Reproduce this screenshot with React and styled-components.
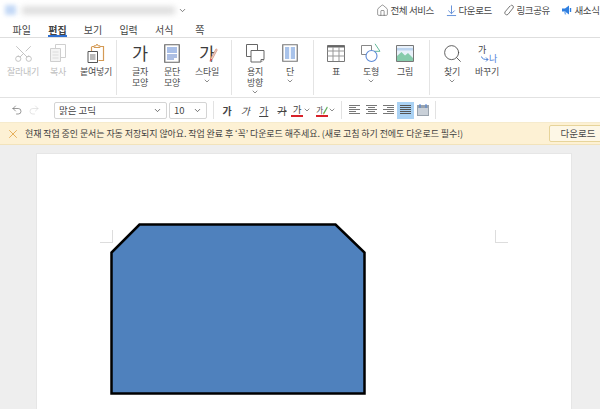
import React from 'react';
import styled, { createGlobalStyle } from 'styled-components';
import { House, Scissors, Search, Undo2, Redo2, X, ChevronDown } from 'lucide-react';

const GlobalStyle = createGlobalStyle`
    html, body {
        margin: 0;
        padding: 0;
        background: #fff;
    }
    * {
        box-sizing: border-box;
    }
`

const Screen = styled.div`
    width: 600px;
    height: 409px;
    overflow: hidden;
    display: flex;
    flex-direction: column;
    font-family: "Noto Sans CJK KR", "Noto Sans", sans-serif;
    color: #444;
    background: #fff;
`

const TitleBar = styled.div`
    height: 20px;
    flex: none;
    display: flex;
    align-items: center;
    padding: 0 0 0 5px;
    white-space: nowrap;
`

const BlurIcon = styled.div`
    width: 11px;
    height: 10px;
    flex: none;
    margin-right: 6px;
    background: #c4d9f6;
    filter: blur(2px);
`

const BlurTitle = styled.div`
    width: 153px;
    height: 7px;
    flex: none;
    background: #d8d8d8;
    filter: blur(3px);
`

const TitleChevron = styled.span`
    display: flex;
    flex: none;
    margin-left: 3px;
    color: #555;
`

const TopActions = styled.div`
    margin-left: 189px;
    flex: none;
    display: flex;
    align-items: center;
`

const TopAction = styled.div`
    display: flex;
    align-items: center;
    gap: 1.5px;
    width: ${p => p.$w}px;
    flex: none;
    font-size: 9.5px;
    letter-spacing: -0.4px;
    color: #484848;
`

const Tabs = styled.div`
    height: 18px;
    flex: none;
    display: flex;
    padding-left: 4px;
    border-bottom: 1px solid #dedede;
`

const Tab = styled.div`
    width: 35.6px;
    text-align: center;
    font-size: 10px;
    line-height: 17px;
    padding-top: 1px;
    position: relative;
    font-weight: ${p => (p.$active ? 700 : 400)};
    color: #444;
    &::after {
        content: '';
        display: ${p => (p.$active ? 'block' : 'none')};
        position: absolute;
        left: 8px;
        right: 8px;
        bottom: 0;
        height: 2px;
        background: #2f6fd0;
    }
`

const Ribbon = styled.div`
    height: 60px;
    flex: none;
    display: flex;
    border-bottom: 1px solid #e2e2e2;
`

const RibbonGroup = styled.div`
    width: ${p => p.$w}px;
    flex: none;
    display: flex;
    padding: 2px 0 0 ${p => p.$pad}px;
    position: relative;
    &::after {
        content: '';
        position: absolute;
        right: 0;
        top: 2px;
        bottom: 2px;
        width: 1px;
        background: ${p => (p.$last ? 'transparent' : '#e4e4e4')};
    }
`

const RibbonButton = styled.div`
    width: ${p => p.$w}px;
    flex: none;
    display: flex;
    flex-direction: column;
    align-items: center;
    color: ${p => (p.$off ? '#bdbdbd' : '#4c4c4c')};
`

const IconSlot = styled.div`
    height: 26px;
    width: 100%;
    flex: none;
    display: flex;
    align-items: center;
    justify-content: center;
    position: relative;
`

const Label = styled.div`
    font-size: 9px;
    line-height: 11px;
    text-align: center;
    letter-spacing: -0.3px;
    white-space: pre;
`

const Caret = styled.div`
    display: flex;
    justify-content: center;
    height: 8px;
    color: #555;
`

const BigGa = styled.span`
    font-size: 17.5px;
    line-height: 24px;
    color: #3c3c3c;
`

// little pieces stacked on top of a ribbon icon
const Overlay = styled.span`
    position: absolute;
    left: ${p => p.$x}px;
    top: ${p => p.$y}px;
    display: block;
    font-size: 9px;
    line-height: 1;
    color: ${p => p.$color || '#444'};
`

const FormatBar = styled.div`
    height: 24px;
    flex: none;
    display: flex;
    align-items: center;
    padding-left: 11px;
`

const History = styled.div`
    width: 43px;
    flex: none;
    display: flex;
    gap: 5px;
    align-items: center;
`

const Select = styled.div`
    width: ${p => p.$w}px;
    height: 17px;
    flex: none;
    margin-right: 2px;
    border: 1px solid #d4d4d4;
    border-radius: 2px;
    display: flex;
    align-items: center;
    justify-content: space-between;
    padding: 0 4px;
    font-size: 9.5px;
    color: #444;
`

const FormatSep = styled.div`
    width: 1px;
    height: 18px;
    flex: none;
    background: #e2e2e2;
    margin: 0 ${p => p.$right}px 0 ${p => p.$left}px;
`

const FormatGa = styled.div`
    width: 18.3px;
    flex: none;
    text-align: center;
    font-size: 10px;
    color: #444;
    font-weight: ${p => (p.$bold ? 700 : 400)};
    font-style: ${p => (p.$italic ? 'italic' : 'normal')};
    text-decoration: ${p => (p.$under ? 'underline' : p.$strike ? 'line-through' : 'none')};
`

const ColorGa = styled.div`
    width: 12px;
    flex: none;
    position: relative;
    text-align: ${p => (p.$small ? 'left' : 'center')};
    font-size: ${p => (p.$small ? 7.5 : 9.5)}px;
    line-height: 11px;
    color: #444;
    border-bottom: 2px solid #d8222a;
`

const ColorPick = styled.div`
    display: flex;
    align-items: center;
    width: ${p => p.$w}px;
    flex: none;
    color: #555;
`

const AlignButton = styled.div`
    width: 17px;
    height: 17px;
    flex: none;
    display: flex;
    align-items: center;
    justify-content: center;
    background: ${p => (p.$active ? '#aad2f4' : 'transparent')};
`

const Notice = styled.div`
    height: 23px;
    flex: none;
    display: flex;
    align-items: center;
    padding-left: 5.5px;
    background: #fdf1d4;
    border-bottom: 1px solid #f2e3bb;
    border-top: 1px solid #f6ebcd;
    white-space: nowrap;
`

const NoticeIcon = styled.span`
    display: flex;
    flex: none;
    color: #e2a64a;
    margin-right: 5.5px;
`

const NoticeText = styled.div`
    width: 524px;
    flex: none;
    font-size: 9px;
    letter-spacing: -0.09px;
    color: #3f3f3f;
`

const NoticeButton = styled.div`
    width: 58px;
    height: 17px;
    flex: none;
    border: 1px solid #e7d49a;
    border-radius: 2px;
    background: #fdf7e6;
    text-align: center;
    font-size: 9.5px;
    line-height: 15px;
    color: #4a4a4a;
`

const Workspace = styled.div`
    flex: 1;
    min-height: 0;
    background: #eeeeee;
    padding: 8px 0 0 36px;
`

const Sheet = styled.div`
    width: 536px;
    height: 300px;
    background: #fff;
    border: 1px solid #e6e6e6;
    padding: 69px 0 0 73px;
    position: relative;
`

const CropMark = styled.div`
    position: absolute;
    top: 76px;
    left: ${p => p.$x}px;
    width: 13px;
    height: 13px;
    border-bottom: 1px solid #ddd;
    ${p => (p.$flip ? 'border-left: 1px solid #ddd;' : 'border-right: 1px solid #ddd;')}
`

const ShapeSvg = styled.svg`
    display: block;
`

const ScissorIcon = styled(Scissors)`
    transform: rotate(-90deg);
`

const Tri = ({ size = 8 }) => <ChevronDown size={size} strokeWidth={2} />

const DownloadIcon = () => (
    <svg width="11" height="13" viewBox="0 0 12 13" fill="none" stroke="#5b8ad6" strokeWidth="1">
        <path d="M6 1v9M2.500 6.500 6 10l3.500-3.500M1 12h10" />
    </svg>
)

const LinkIcon = () => (
    <svg width="12" height="13" viewBox="0 0 12 13" fill="none" stroke="#777" strokeWidth="1">
        <path d="M7.500 1.800a1.700 1.700 0 0 1 2.500 2.300L5 10.400a2 2 0 0 1-3-2.500L7 2" />
    </svg>
)

const MegaphoneIcon = () => (
    <svg width="12" height="12" viewBox="0 0 12 12">
        <path d="M1 4.500h3L8 1.500v9l-4-3H1z" fill="#2f7fe0" />
        <path d="M9.500 4v4" stroke="#2f7fe0" strokeWidth="1.400" />
        <path d="M3 7.500h1.500l.8 3H3.800z" fill="#7aaef0" />
    </svg>
)

const CopyIcon = () => (
    <svg width="18" height="20" viewBox="0 0 18 20" fill="#fff" stroke="#cfcfcf">
        <path d="M6.500 1.500h10v13h-10z" />
        <path d="M1.500 5.500h10v13h-10z" fill="#f4f4f4" />
        <path d="M3.500 9h6M3.500 12h6M3.500 15h6" stroke="#dcdcdc" />
    </svg>
)

const PasteIcon = () => (
    <svg width="18" height="21" viewBox="0 0 18 21" fill="none">
        <path d="M4.500 3.500h12v14h-5" stroke="#d49a55" strokeWidth="1.200" />
        <path d="M7 4.500V2.800h2L10 1l1 1.800h2v1.700z" fill="#fff" stroke="#d49a55" />
        <path d="M4.500 4v4" stroke="#d49a55" strokeWidth="1.200" />
        <path d="M1 8.500h9.500v11H1z" fill="#fff" stroke="#555" />
        <path d="M3 12h5.500M3 14h5.500M3 16h5.500" stroke="#777" />
    </svg>
)

const ParagraphIcon = () => (
    <svg width="16" height="19" viewBox="0 0 16 19" fill="none">
        <path d="M.75.75h14.500v17.500H.75z" fill="#fff" stroke="#666" strokeWidth="1.200" />
        <path d="M3 3h10v6H3z" fill="#a9bfe8" />
        <path d="M3 11h10M3 13h10M3 15h7" stroke="#5a7fc8" />
    </svg>
)

const PenIcon = () => (
    <svg width="10" height="15" viewBox="0 0 11 17" fill="none">
        <path d="M9 1 3 12l-1 3 2.500-2L10.300 2z" fill="#f3d9c9" stroke="#d59a8a" />
        <path d="M2 15l.8-3 1.700 1z" fill="#d8303a" />
    </svg>
)

const MiniPen = () => (
    <svg width="6" height="9" viewBox="0 0 6 9">
        <path d="M5 .5 1.500 6.500 1 8.500 2.500 7.500 5.800 1.500z" fill="#5fae5a" />
        <path d="M1.500 6.500 1 8.500 2.500 7.500z" fill="#e0b030" />
    </svg>
)

const PageSizeIcon = () => (
    <svg width="20" height="20" viewBox="0 0 20 20" fill="#fff" stroke="#666">
        <path d="M1.500 1.500h11v12h-11z" />
        <path d="M6 7.500h13v9l-3 2.500H6z" />
        <path d="M16 19v-2.500h3" />
    </svg>
)

const ColumnsIcon = () => (
    <svg width="16" height="18" viewBox="0 0 16 18">
        <path d="M.75.75h14.500v16.500H.75z" fill="#fff" stroke="#777" strokeWidth="1.200" />
        <path d="M3 3h4.200v12H3zM8.800 3H13v12H8.800z" fill="#a9c3ea" />
    </svg>
)

const TableIcon = () => (
    <svg width="18" height="17" viewBox="0 0 18 17" fill="#fff" stroke="#777">
        <path d="M.5.5h17v16H.5z" />
        <path d="M.5 1.500h17" strokeWidth="2" stroke="#666" />
        <path d="M.5 6h17M.5 11h17M6 2v14M12 2v14" stroke="#999" />
    </svg>
)

const ShapeIcon = () => (
    <svg width="20" height="20" viewBox="0 0 20 20" fill="none">
        <path d="M.5 2.500h10v9H.5z" stroke="#888" />
        <path d="M14 .8l5 7.500h-6" stroke="#63b99a" />
        <circle cx="10.500" cy="13" r="5.500" fill="#fff" stroke="#5d8ad6" strokeWidth="1.100" />
    </svg>
)

const PictureIcon = () => (
    <svg width="18" height="17" viewBox="0 0 18 17">
        <path d="M.5.5h17v16H.5z" fill="#e9f1fa" stroke="#777" />
        <path d="M1 3h16v2.500H1z" fill="#bcd4ef" />
        <path d="M1 16v-5l4.500-4 3.500 3.500 3-2.500 5 5v3z" fill="#86cbab" />
    </svg>
)

const ReplaceArrow = () => (
    <svg width="8" height="6" viewBox="0 0 8 6" fill="none" stroke="#4f82d8" display="block">
        <path d="M.5.5C1 3 3 3.500 7 3.500M5 1.500l2 2-2 2" />
    </svg>
)

const AlignIcon = ({ rows, color = '#777' }) => (
    <svg width="11" height="11" viewBox="0 0 11 11" stroke={color}>
        {rows.map((r, i) => (
            <path key={i} d={`M${r[0]} ${i * 2 + 0.5}H${r[1]}`} />
        ))}
    </svg>
)

const DistributeIcon = () => (
    <svg width="12" height="12" viewBox="0 0 12 12">
        <path d="M0 1h12v11H0z" fill="#99a3ad" />
        <path d="M1 4h10v7H1z" fill="#c9d0d8" />
        <path d="M3 0v4M9 0v4" stroke="#4f82d8" />
    </svg>
)

const ribbonGroups = [
    { w: 117, pad: 5, items: [
        { w: 36, icon: <ScissorIcon size={21} strokeWidth={1} />, label: '잘라내기', off: true },
        { w: 34, icon: <CopyIcon />, label: '복사', off: true },
        { w: 42, icon: <PasteIcon />, label: '붙여넣기' },
    ] },
    { w: 115, pad: 6, items: [
        { w: 34, icon: <BigGa>가</BigGa>, label: '글자\n모양' },
        { w: 30, icon: <ParagraphIcon />, label: '문단\n모양' },
        { w: 40, icon: (
            <>
                <BigGa>가</BigGa>
                <Overlay $x={21} $y={8}><PenIcon /></Overlay>
            </>
        ), label: '스타일', caret: true },
    ] },
    { w: 82, pad: 6, items: [
        { w: 34, icon: <PageSizeIcon />, label: '용지\n방향', caret: true },
        { w: 36, icon: <ColumnsIcon />, label: '단', caret: true },
    ] },
    { w: 116, pad: 5, items: [
        { w: 34, icon: <TableIcon />, label: '표' },
        { w: 36, icon: <ShapeIcon />, label: '도형', caret: true },
        { w: 32, icon: <PictureIcon />, label: '그림' },
    ] },
    { w: 170, pad: 5, last: true, items: [
        { w: 34, icon: <Search size={21} strokeWidth={1} />, label: '찾기', caret: true },
        { w: 36, icon: (
            <>
                <Overlay $x={9} $y={5}>가</Overlay>
                <Overlay $x={12} $y={16}><ReplaceArrow /></Overlay>
                <Overlay $x={20} $y={14} $color="#4f82d8">나</Overlay>
            </>
        ), label: '바꾸기' },
    ] },
]

const App = () => {

    return(
        <Screen>
            <GlobalStyle />
            <TitleBar>
                <BlurIcon />
                <BlurTitle />
                <TitleChevron><ChevronDown size={9} strokeWidth={2} /></TitleChevron>
                <TopActions>
                    <TopAction $w={70}><House size={13} strokeWidth={1} color="#444" />전체 서비스</TopAction>
                    <TopAction $w={57}><DownloadIcon />다운로드</TopAction>
                    <TopAction $w={58}><LinkIcon />링크공유</TopAction>
                    <TopAction $w={40}><MegaphoneIcon />새소식</TopAction>
                </TopActions>
            </TitleBar>
            <Tabs>
                <Tab>파일</Tab>
                <Tab $active>편집</Tab>
                <Tab>보기</Tab>
                <Tab>입력</Tab>
                <Tab>서식</Tab>
                <Tab>쪽</Tab>
            </Tabs>
            <Ribbon>
                {ribbonGroups.map((group, i) => (
                    <RibbonGroup key={i} $w={group.w} $pad={group.pad} $last={group.last}>
                        {group.items.map(item => (
                            <RibbonButton key={item.label} $w={item.w} $off={item.off}>
                                <IconSlot>{item.icon}</IconSlot>
                                <Label>{item.label}</Label>
                                {item.caret && <Caret><Tri /></Caret>}
                            </RibbonButton>
                        ))}
                    </RibbonGroup>
                ))}
            </Ribbon>
            <FormatBar>
                <History>
                    <Undo2 size={12} strokeWidth={1.2} color="#555" />
                    <Redo2 size={12} strokeWidth={1.2} color="#d4d4d4" />
                </History>
                <Select $w={113}>맑은 고딕<Tri size={9} /></Select>
                <Select $w={38}>10<Tri size={9} /></Select>
                <FormatSep $left={4} $right={4} />
                <FormatGa $bold>가</FormatGa>
                <FormatGa $italic>가</FormatGa>
                <FormatGa $under>가</FormatGa>
                <FormatGa $strike>가</FormatGa>
                <ColorPick $w={25}><ColorGa>가</ColorGa><Tri /></ColorPick>
                <ColorPick $w={21}>
                    <ColorGa $small>가<Overlay $x={6} $y={2}><MiniPen /></Overlay></ColorGa>
                    <Tri />
                </ColorPick>
                <FormatSep $left={4} $right={4} />
                <AlignButton><AlignIcon rows={[[0, 11], [0, 7], [0, 11], [0, 7], [0, 11]]} /></AlignButton>
                <AlignButton><AlignIcon rows={[[0, 11], [2, 9], [0, 11], [2, 9], [0, 11]]} /></AlignButton>
                <AlignButton><AlignIcon rows={[[0, 11], [4, 11], [0, 11], [4, 11], [0, 11]]} /></AlignButton>
                <AlignButton $active><AlignIcon color="#555" rows={[[0, 11], [0, 11], [0, 11], [0, 11], [0, 11]]} /></AlignButton>
                <AlignButton><DistributeIcon /></AlignButton>
                <FormatSep $left={4} $right={0} />
            </FormatBar>
            <Notice>
                <NoticeIcon><X size={14} strokeWidth={1.5} /></NoticeIcon>
                <NoticeText>현재 작업 중인 문서는 자동 저장되지 않아요. 작업 완료 후 ‘꼭’ 다운로드 해주세요. (새로 고침 하기 전에도 다운로드 필수!)</NoticeText>
                <NoticeButton>다운로드</NoticeButton>
            </Notice>
            <Workspace>
                <Sheet>
                    <CropMark $x={63} />
                    <CropMark $x={458} $flip />
                    <ShapeSvg width="258" height="173" viewBox="0 0 258 173">
                        <path d="M29.500 1.500H225.500L254.500 29.500V170.500H1.500V29.500Z" fill="#4f81bd" stroke="#000" strokeWidth="2.500" />
                    </ShapeSvg>
                </Sheet>
            </Workspace>
        </Screen>
    )
}

export default App;
